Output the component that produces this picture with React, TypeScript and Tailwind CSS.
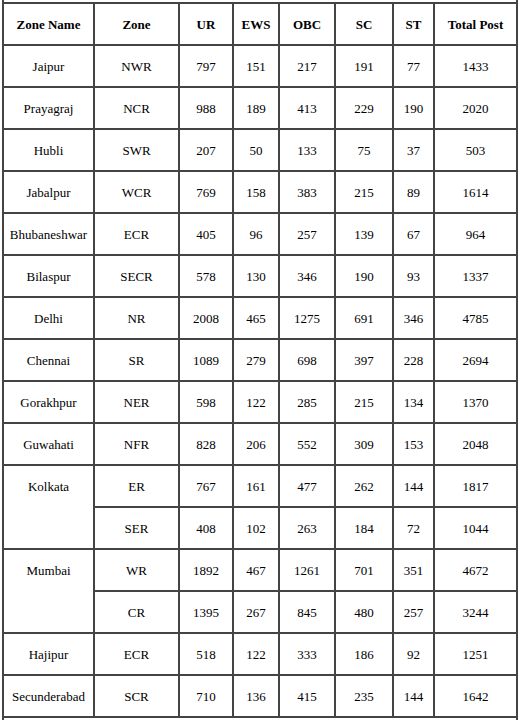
import React from 'react';

type Row = {
  name?: string;
  span?: number;
  zone: string;
  ur: number;
  ews: number;
  obc: number;
  sc: number;
  st: number;
  total: number;
};

const rows: Row[] = [
  { name: 'Jaipur', zone: 'NWR', ur: 797, ews: 151, obc: 217, sc: 191, st: 77, total: 1433 },
  { name: 'Prayagraj', zone: 'NCR', ur: 988, ews: 189, obc: 413, sc: 229, st: 190, total: 2020 },
  { name: 'Hubli', zone: 'SWR', ur: 207, ews: 50, obc: 133, sc: 75, st: 37, total: 503 },
  { name: 'Jabalpur', zone: 'WCR', ur: 769, ews: 158, obc: 383, sc: 215, st: 89, total: 1614 },
  { name: 'Bhubaneshwar', zone: 'ECR', ur: 405, ews: 96, obc: 257, sc: 139, st: 67, total: 964 },
  { name: 'Bilaspur', zone: 'SECR', ur: 578, ews: 130, obc: 346, sc: 190, st: 93, total: 1337 },
  { name: 'Delhi', zone: 'NR', ur: 2008, ews: 465, obc: 1275, sc: 691, st: 346, total: 4785 },
  { name: 'Chennai', zone: 'SR', ur: 1089, ews: 279, obc: 698, sc: 397, st: 228, total: 2694 },
  { name: 'Gorakhpur', zone: 'NER', ur: 598, ews: 122, obc: 285, sc: 215, st: 134, total: 1370 },
  { name: 'Guwahati', zone: 'NFR', ur: 828, ews: 206, obc: 552, sc: 309, st: 153, total: 2048 },
  { name: 'Kolkata', span: 2, zone: 'ER', ur: 767, ews: 161, obc: 477, sc: 262, st: 144, total: 1817 },
  { zone: 'SER', ur: 408, ews: 102, obc: 263, sc: 184, st: 72, total: 1044 },
  { name: 'Mumbai', span: 2, zone: 'WR', ur: 1892, ews: 467, obc: 1261, sc: 701, st: 351, total: 4672 },
  { zone: 'CR', ur: 1395, ews: 267, obc: 845, sc: 480, st: 257, total: 3244 },
  { name: 'Hajipur', zone: 'ECR', ur: 518, ews: 122, obc: 333, sc: 186, st: 92, total: 1251 },
  { name: 'Secunderabad', zone: 'SCR', ur: 710, ews: 136, obc: 415, sc: 235, st: 144, total: 1642 },
];

const cell = 'border-2 border-[#444] h-[42px] p-0 text-center align-middle';

export default function App() {
  return (
    <div className="bg-white px-[2px] text-black text-[13px] leading-[15px] font-serif">
      <table className="w-[516px] table-fixed border-collapse font-[Liberation_Serif,Times_New_Roman,serif]">
        <colgroup>
          <col className="w-[91px]" />
          <col className="w-[85px]" />
          <col className="w-[54px]" />
          <col className="w-[46px]" />
          <col className="w-[56px]" />
          <col className="w-[58px]" />
          <col className="w-[41px]" />
          <col className="w-[83px]" />
        </colgroup>
        <tbody>
          <tr>
            <td colSpan={8} className="border-2 border-t-0 border-[#444] h-[3px] p-0" />
          </tr>
          <tr className="font-bold">
            {['Zone Name', 'Zone', 'UR', 'EWS', 'OBC', 'SC', 'ST', 'Total Post'].map((h) => (
              <th key={h} className={cell}>
                {h}
              </th>
            ))}
          </tr>
          {rows.map((r, i) => (
            <tr key={i}>
              {r.name && (
                <td
                  rowSpan={r.span}
                  className={r.span ? 'border-2 border-[#444] p-0 pt-[13px] text-center align-top' : cell}
                >
                  {r.name}
                </td>
              )}
              <td className={cell}>{r.zone}</td>
              <td className={cell}>{r.ur}</td>
              <td className={cell}>{r.ews}</td>
              <td className={cell}>{r.obc}</td>
              <td className={cell}>{r.sc}</td>
              <td className={cell}>{r.st}</td>
              <td className={cell}>{r.total}</td>
            </tr>
          ))}
          <tr>
            <td colSpan={8} className="border-2 border-b-0 border-[#444] h-[4px] p-0" />
          </tr>
        </tbody>
      </table>
    </div>
  );
}
